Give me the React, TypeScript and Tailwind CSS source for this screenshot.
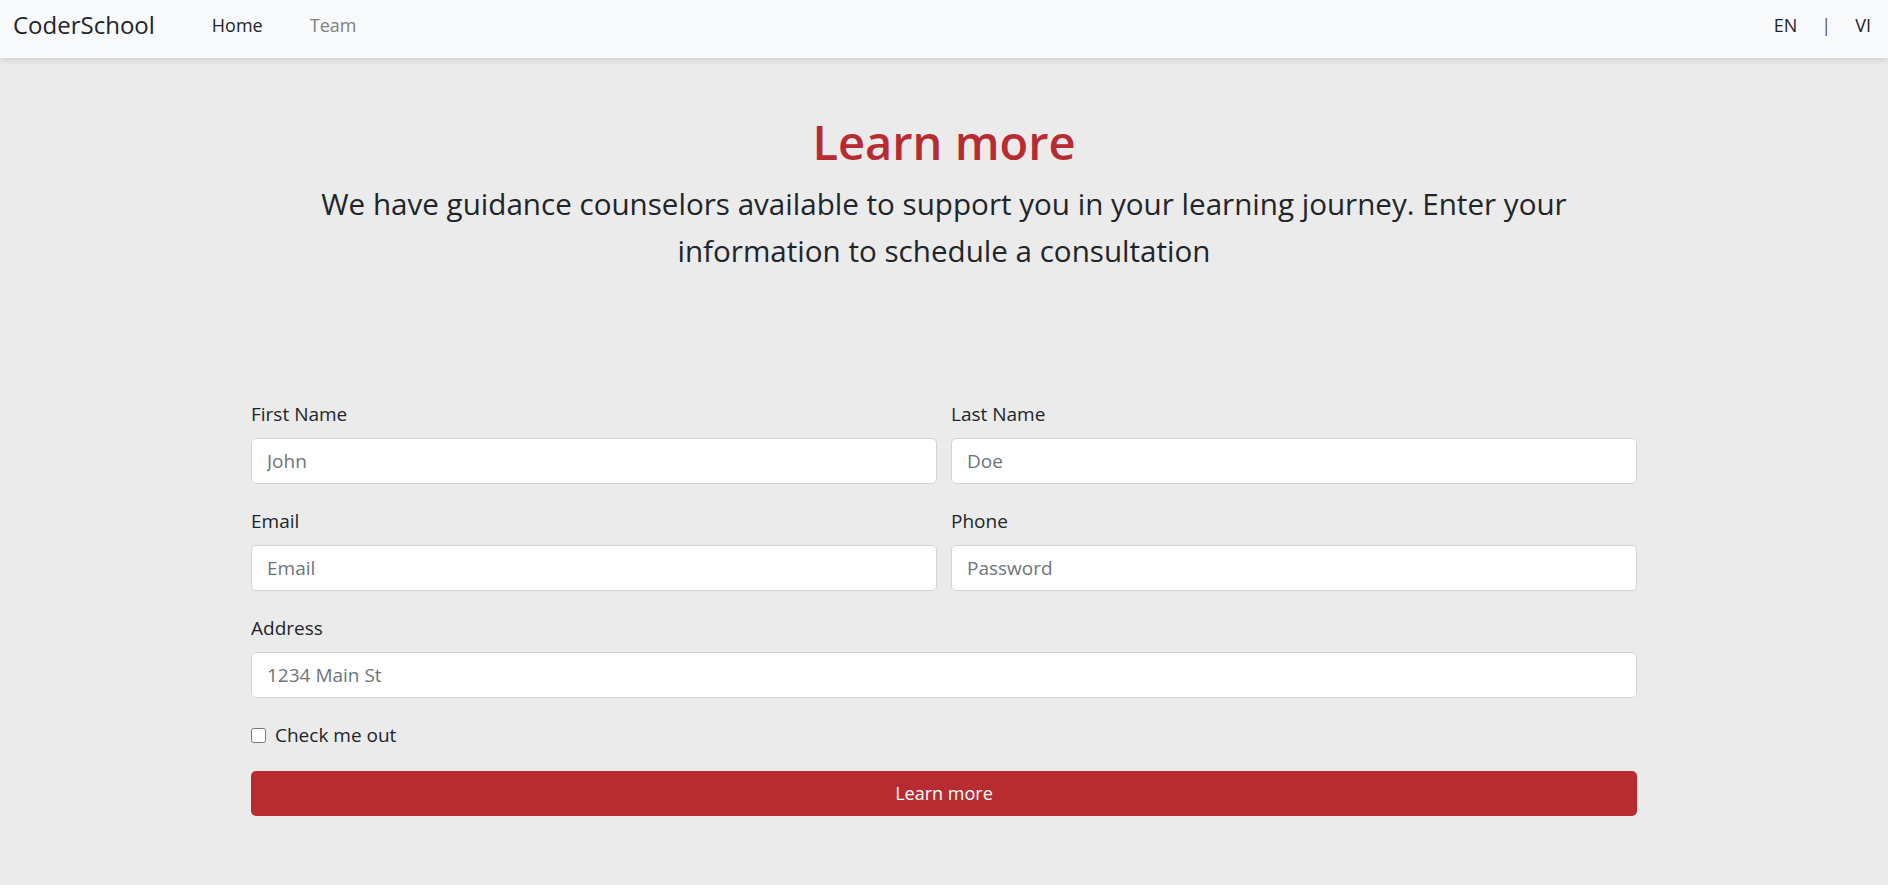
import { useState } from "react";

const font = { fontFamily: '"Open Sans", "Noto Sans", sans-serif' };

function Field({
  label,
  placeholder,
  type = "text",
}: {
  label: string;
  placeholder: string;
  type?: string;
}) {
  return (
    <div className="flex flex-col">
      <label className="text-[19px] leading-[28px] text-[#212529] mb-[10px]">{label}</label>
      <input
        type={type}
        placeholder={placeholder}
        className="h-[46px] w-full rounded-[5px] border border-[#ced4da] bg-white px-[15px] text-[19px] text-[#495057] placeholder:text-[#6c757d] outline-none"
      />
    </div>
  );
}

export default function App() {
  const [checked, setChecked] = useState(false);

  return (
    <div className="min-h-screen bg-[#ebebeb] text-[#212529]" style={font}>
      <nav className="relative z-10 flex h-[58px] items-center justify-between bg-[#f8f9fa] pb-[8px] pl-[13px] pr-[17px] shadow-[0_2px_6px_rgba(0,0,0,0.12)]">
        <div className="flex items-center">
          <a className="text-[24px] text-[#212529]">CoderSchool</a>
          <div className="ml-[57px] flex items-center gap-[47px] text-[18px]">
            <a className="text-[#212529]">Home</a>
            <a className="text-[#808080]">Team</a>
          </div>
        </div>
        <div className="flex items-center text-[18px] text-[#212529]">
          <span>EN</span>
          <span className="mx-[24px] text-[#555]">|</span>
          <span>VI</span>
        </div>
      </nav>

      <main className="flex flex-col items-center">
        <h1 className="mt-[49px] text-[47px] font-semibold leading-[70px] text-[#b72c30]">Learn more</h1>
        <p className="mt-[3px] w-[1280px] text-center text-[29.6px] leading-[47px] text-[#212529]">
          We have guidance counselors available to support you in your learning journey. Enter your information to
          schedule a consultation
        </p>

        <form className="mt-[126px] w-[1386px] pb-[70px]" onSubmit={(e) => e.preventDefault()}>
          <div className="grid grid-cols-2 gap-x-[14px] gap-y-[23px]">
            <Field label="First Name" placeholder="John" />
            <Field label="Last Name" placeholder="Doe" />
            <Field label="Email" placeholder="Email" type="email" />
            <Field label="Phone" placeholder="Password" />
            <div className="col-span-2">
              <Field label="Address" placeholder="1234 Main St" />
            </div>
          </div>

          <label className="mt-[23px] flex items-center gap-[9px] text-[19px] leading-[28px]">
            <input
              type="checkbox"
              checked={checked}
              onChange={() => setChecked(!checked)}
              className="h-[15px] w-[15px]"
            />
            Check me out
          </label>

          <button
            type="submit"
            className="mt-[22px] h-[45px] w-full rounded-[5px] bg-[#b72c30] text-[18px] text-white"
          >
            Learn more
          </button>
        </form>
      </main>
    </div>
  );
}
